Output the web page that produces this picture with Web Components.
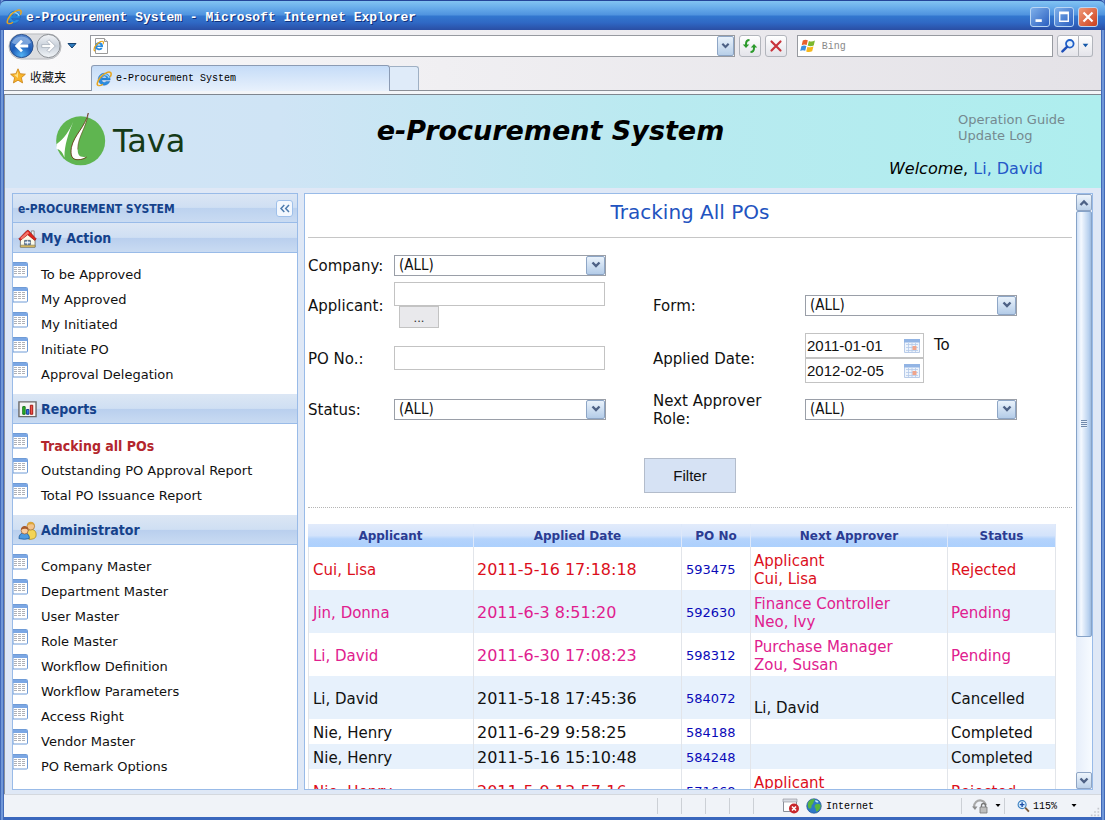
<!DOCTYPE html>
<html lang="en">
<head>
<meta charset="utf-8">
<title>e-Procurement System</title>
<style>
html, body { margin: 0; height: 100%; }
body { font-family: "DejaVu Sans", Verdana, sans-serif; font-size: 15px; color: #111; overflow: hidden; }
</style>
</head>
<body>
<browser-window></browser-window>

<script>
const ICONS = {
  ie: `<svg viewBox="0 0 16 16"><path d="M8.300 2.200a6 6 0 1 0 5.500 8.200h-3.600a2.600 2.600 0 0 1-4.600-1.400h8.600a6 6 0 0 0-5.900-6.800zM5.800 7a2.600 2.600 0 0 1 5 0z" fill="#2b8de0" stroke="#0d5cb0" stroke-width=".4"/><path d="M4 6.500a5 5 0 0 1 7.400-2 4 4 0 0 1 1.700 2.400" fill="none" stroke="#9fdcfa" stroke-width="1.200"/><path d="M2.800 14.600C.2 14.600 1 10.500 4.300 6.500 8 2 13 .2 14.600 1.600c1 .9.500 2.700-.3 4.200" fill="none" stroke="#e8a41c" stroke-width="1.500"/><path d="M2.800 14.600c1.500.2 3.200-.7 4.200-1.400" fill="none" stroke="#e8a41c" stroke-width="1.200"/></svg>`,
  page: `<svg viewBox="0 0 16 16"><path d="M2.500.5h9l3 3v12h-12z" fill="#fff" stroke="#9a9a9a"/><path d="M11.500.5v3h3" fill="#eee" stroke="#9a9a9a"/><path d="M6 4.200a4 4 0 1 0 3.700 5.500H7.500a1.900 1.900 0 0 1-3.300-.8H10A4 4 0 0 0 6 4.200zM4.300 7.500a1.800 1.800 0 0 1 3.400 0z" fill="#2b8de0"/><path d="M2 12.800C.3 12.600 1 9.500 3.200 7 5.500 4.200 9 2.500 10.200 3.600c.6.600.3 1.600-.2 2.600" fill="none" stroke="#e8a41c" stroke-width="1.200"/></svg>`,
  nav: `<svg viewBox="0 0 56 28"><defs><radialGradient id="a" cx=".5" cy=".9" r=".9"><stop offset="0" stop-color="#52b2f4"/><stop offset=".5" stop-color="#1d5cb8"/><stop offset="1" stop-color="#5a8ad0"/></radialGradient><linearGradient id="b" x2="0" y2="1"><stop offset="0" stop-color="#f2f4f7"/><stop offset=".5" stop-color="#c9d1db"/><stop offset="1" stop-color="#f3f6f9"/></linearGradient></defs><path d="M14 1h28a13 13 0 0 1 0 26H14a13 13 0 0 1 0-26z" fill="#dcdde0" stroke="#b5b7bb"/><circle cx="14" cy="13.500" r="12" fill="url(#a)" stroke="#274d8a"/><path d="M4 10a11 11 0 0 1 20 0c-5 3-15 3-20 0z" fill="#a9c8ee" opacity=".6"/><path d="M7 13.500l6.500-6.500 2 2-3 3H21v3h-8.500l3 3-2 2z" fill="#fff"/><circle cx="42" cy="13.500" r="12" fill="url(#b)" stroke="#85898f"/><path d="M49 13.500L42.500 7l-2 2 3 3H35v3h8.500l-3 3 2 2z" fill="#fff" stroke="#9aa3b0" stroke-width=".7"/></svg>`,
  tri: `<svg viewBox="0 0 10 8"><path d="M1 1.500h8L5 6z" fill="#2f7cc0" stroke="#14406e"/></svg>`,
  caret: `<svg viewBox="0 0 8 6"><path d="M1.500 1h5L4 4z" fill="currentColor"/></svg>`,
  chev: `<svg viewBox="0 0 10 8"><path d="M1.500 1.500L5 5l3.500-3.500" fill="none" stroke="#4d6185" stroke-width="2.400"/></svg>`,
  up: `<svg viewBox="0 0 10 8"><path d="M1.500 6L5 2.500 8.500 6" fill="none" stroke="#4d6185" stroke-width="2.400"/></svg>`,
  refresh: `<svg viewBox="0 0 16 16"><path d="M7.500 2C5 2 4 3.500 4 6v1" fill="none" stroke="#2b9a2b" stroke-width="2"/><path d="M.8 6.500h6.400L4 10z" fill="#2b9a2b"/><path d="M8.500 14c2.500 0 3.500-1.500 3.500-4V9" fill="none" stroke="#2b9a2b" stroke-width="2"/><path d="M8.800 9.500h6.400L12 6z" fill="#2b9a2b"/></svg>`,
  stop: `<svg viewBox="0 0 16 16"><path d="M3.500 3.500l9 9M12.500 3.500l-9 9" stroke="#c8333b" stroke-width="2.200" stroke-linecap="round"/></svg>`,
  windows: `<svg viewBox="0 0 16 16"><path d="M2.800 2.500q2.600-1.600 5-.2L6.700 7q-2.400-1.200-5 .2z" fill="#e8602c"/><path d="M8.900 2.900q2.700 1.300 6-.3L13.700 7.400q-3.200 1.500-6 .2z" fill="#7cb82f"/><path d="M1.400 8.300q2.600-1.500 5-.2l-1.200 4.700q-2.400-1.200-5 .2z" fill="#3a8ee0"/><path d="M7.400 8.700q2.800 1.300 6-.2l-1.200 4.800q-3.200 1.500-6 .2z" fill="#f6b71c"/></svg>`,
  search: `<svg viewBox="0 0 16 16"><circle cx="9.800" cy="5.800" r="3.800" fill="#e4f0fc" stroke="#1f5fc8" stroke-width="1.800"/><path d="M7 8.800l-4.600 4.600" stroke="#1f4fb8" stroke-width="2.500" stroke-linecap="round"/></svg>`,
  star: `<svg viewBox="0 0 16 16"><path d="M8 .8l2.100 4.900 5.300.5-4 3.500 1.200 5.200L8 12.200l-4.600 2.700 1.200-5.200-4-3.500 5.300-.5z" fill="#f8b52c" stroke="#c98012" stroke-width=".8"/><path d="M8 3v7l-4-3.200 2.500-.2z" fill="#fde28a"/></svg>`,
  min: `<svg viewBox="0 0 20 20"><path d="M5 12.500h7v3H5z" fill="#fff"/></svg>`,
  max: `<svg viewBox="0 0 20 20"><path d="M4.500 4h11v11.500h-11z M6 7v7h8V7z" fill="#fff" fill-rule="evenodd"/></svg>`,
  close: `<svg viewBox="0 0 20 20"><path d="M5 5l10 10M15 5L5 15" stroke="#fff" stroke-width="2.400"/></svg>`,
  logo: `<svg viewBox="168 56 150 160"><circle cx="242" cy="140" r="74" fill="#5fb550"/><path d="M220 82C207 112 192 134 169 150v14c12 2 20 14 24 26 0-38 12-72 27-108z" fill="#fff"/><path d="M263 60C256 98 224 122 215 158c-5 24 0 38 18 38 12 0 20-3 26-8-20 3-26-5-26-22 0-38 24-62 30-106z" fill="#fff"/><path d="M265 56C256 98 222 122 214 160c-4 24 2 38 20 37 12 0 20-4 26-8" fill="none" stroke="#6b3318" stroke-width="2.500"/><path d="M265 56c-3 40-32 70-32 110" fill="none" stroke="#6b3318" stroke-width="1.500"/></svg>`,
  home: `<svg viewBox="0 0 20 20"><path d="M14 2h3v6h-3z" fill="#eee" stroke="#777" stroke-width=".8"/><path d="M2.500 10.500L10 4l8 6.500V19h-15.500z" fill="#fdfae8" stroke="#777"/><path d="M2.500 17h15.500v2.200H2.500z" fill="#e8c35a" stroke="#776" stroke-width=".7"/><path d="M.8 10.500L9.500 1.500h1.500l8.200 9-1.600 1.500-7.400-6-7.800 6z" fill="#e0231b" stroke="#8d120d" stroke-width=".7"/><path d="M2.500 9.500L10 2.500l2 1.800-8 6.500z" fill="#f4776c"/><path d="M7 12h6v4.500H7z" fill="#8ea8c8" stroke="#567"/><path d="M10 12v4.500M7 14.200h6" stroke="#fff" stroke-width=".8"/></svg>`,
  chart: `<svg viewBox="0 0 20 18"><path d="M1 1h18v15.500H1z" fill="#f4f4f4" stroke="#6b6b6b" stroke-width="1.500"/><path d="M5 6h2.500v8H5z" fill="#2fbf2f" stroke="#106810"/><path d="M9 9h2.500v5H9z" fill="#3478e8" stroke="#123a90"/><path d="M13 4.500h2.500V14H13z" fill="#f05048" stroke="#a01410"/></svg>`,
  people: `<svg viewBox="0 0 20 20"><path d="M9 17c0-5 1-8 5-8s5.500 3 5 6.500-4 3.500-7 4z" fill="#f2d457" stroke="#a58418" stroke-width=".8"/><circle cx="13.500" cy="5.500" r="4" fill="#f4c48b" stroke="#9a6a2a" stroke-width=".7"/><path d="M9.400 5c.2-5.500 8-5.500 8.200 0-2-2-5-2-8.200 0z" fill="#dba63a"/><path d="M1 18.500c0-4 2-6 5.500-6s5.500 2 5.500 6q-5 1.500-11 0z" fill="#4d9ae0" stroke="#1b5799" stroke-width=".8"/><circle cx="7" cy="10" r="3.700" fill="#f9cda0" stroke="#9a5a2a" stroke-width=".7"/><path d="M3 9.500c0-5.500 8-5.500 8 0-2-1.800-5-1.800-8 0z" fill="#a85a2c"/></svg>`,
  grid: `<svg viewBox="0 0 15 16"><path d="M0 .5h13.500q1 0 1 1V14q0 1-1 1H0z" fill="#fff" stroke="#6f9bd6"/><path d="M0 1h13.500q.8 0 .8 1v2H0z" fill="#7ba7e4"/><path d="M1 5.500h3M5 5.500h3M9 5.500h3M1 7.500h3M5 7.500h3M9 7.500h3M1 9.500h3M5 9.500h3M9 9.500h3M1 11.500h3M5 11.500h3M9 11.500h3" stroke="#b0b2b8"/></svg>`,
  calendar: `<svg viewBox="0 0 16 16"><path d="M.5 1.500h15v13H.5z" fill="#eef4fc" stroke="#b8cbe8"/><path d="M0 1h16v3.500H0z" fill="#92b4e4"/><path d="M2 6.500h12M2 9.500h12M2 12.500h12M4.500 5v9M8 5v9M11.500 5v9" stroke="#b4c9e8" stroke-width=".8"/><path d="M8.500 8h4v4h-4z" fill="#f0a58c"/></svg>`,
  fold: `<svg viewBox="0 0 18 18"><rect x=".5" y=".5" width="16" height="16" rx="2.500" fill="#f3f8fe" stroke="#9fc0ea"/><path d="M8.300 5L5 8.500 8.300 12M13 5L9.700 8.500 13 12" fill="none" stroke="#4e7cae" stroke-width="1.500"/></svg>`,
  blocked: `<svg viewBox="0 0 18 16"><path d="M1.500 1.500h13v12h-13z" fill="#fff" stroke="#8a8f98"/><path d="M1 1h14v3H1z" fill="#d7dbe2" stroke="#8a8f98" stroke-width=".6"/><circle cx="12" cy="10.500" r="5" fill="#c8262b"/><path d="M10 8.500l4 4M14 8.500l-4 4" stroke="#fff" stroke-width="1.600"/></svg>`,
  globe: `<svg viewBox="0 0 16 16"><circle cx="8" cy="8" r="7.300" fill="#2d78c8" stroke="#1b4e88" stroke-width=".6"/><path d="M2 5C3 2 6 1 8.500 1c1 1.500-1 2-1 3.500S5 7 5.500 8.500 4 11 3 10.500 1.500 7 2 5z" fill="#59b63e"/><path d="M9.500 6.500c2-1.500 4.500-.5 5.300 1-.2 3-2 5-4 6.200-1.500-.7-.5-2.700-1.500-3.700s-.8-2.500.2-3.500z" fill="#59b63e"/><path d="M9 2.500c1.500-.5 3 .5 3.500 1.500-1 1-2.500.5-3-.2z" fill="#bfe8f8"/></svg>`,
  lock: `<svg viewBox="0 0 16 16"><path d="M2 9C2 5 5 2 9 2.500s4 3 5 5" fill="none" stroke="#a8a8a8" stroke-width="2.200"/><path d="M0 8.500h5.500L3 12z" fill="#8d8d8d"/><path d="M9.500 9V7.500a2 2 0 0 1 4 0V9" fill="none" stroke="#777" stroke-width="1.300"/><path d="M8 9h7v6H8z" fill="#bdbdbd" stroke="#777" stroke-width=".8"/></svg>`,
  zoom: `<svg viewBox="0 0 14 14"><circle cx="5.500" cy="5" r="4.300" fill="#d9efff" stroke="#3c7fc0" stroke-width="1.200"/><path d="M3 5h5M5.500 2.500v5" stroke="#1d4fa8" stroke-width="1.500"/><path d="M8.800 8.300l4 4.200" stroke="#7a5a3a" stroke-width="2"/></svg>`,
  grip: `<svg viewBox="0 0 12 12"><path d="M9 1h2v2H9zM5 5h2v2H5zM9 5h2v2H9zM1 9h2v2H1zM5 9h2v2H5zM9 9h2v2H9z" fill="#c5c8cd"/></svg>`
};

function define(name, css, html) {
  const t = document.createElement("template");
  t.innerHTML = `<style>*{box-sizing:border-box}${css}</style>${html}`;
  customElements.define(name, class extends HTMLElement {
    constructor() {
      super();
      this.attachShadow({ mode: "open" }).append(t.content.cloneNode(true));
    }
  });
}

customElements.define("ui-icon", class extends HTMLElement {
  connectedCallback() {
    if (this.shadowRoot) return;
    this.attachShadow({ mode: "open" }).innerHTML =
      `<style>:host{display:block;flex:none;width:16px;height:16px}svg{display:block;width:100%;height:100%}</style>` +
      ICONS[this.getAttribute("name")];
    this.setAttribute("aria-hidden", "true");
  }
});

define("title-bar", `
:host{display:flex;align-items:center;height:30px;padding:3px 7px 0 6px;gap:4px;border-top:1px solid #24459a;
 background:linear-gradient(#82c4f2,#6cb0ec 20%,#4f93df 48%,#3377cf 52%,#2f68c4 75%,#2a4ea4);
 border-radius:6px 6px 0 0}
h1{flex:1;margin:0;font:bold 13px "Liberation Mono",monospace;color:#fff;text-shadow:1px 1px 0 #10307c;white-space:nowrap}
button{width:20px;height:20px;padding:0;border:1px solid #b9d6f4;border-radius:3px;background:linear-gradient(135deg,#7fb0ea,#2a5fc0)}
button ui-icon{width:18px;height:18px}
.x{background:linear-gradient(135deg,#f09a78,#cc3f1c)}
`, `<ui-icon name="ie"></ui-icon><h1>e-Procurement System - Microsoft Internet Explorer</h1>
<button aria-label="Minimize"><ui-icon name="min"></ui-icon></button>
<button aria-label="Maximize"><ui-icon name="max"></ui-icon></button>
<button class="x" aria-label="Close"><ui-icon name="close"></ui-icon></button>`);

define("nav-bar", `
:host{display:flex;align-items:center;height:32px;padding:0 8px 0 4px}
.nav{width:54px;height:27px;padding:0;border:0;background:none}
.nav ui-icon{width:54px;height:27px}
.hist{width:20px;height:20px;margin-right:8px;padding:0 5px;border:0;background:none}
.hist ui-icon{width:10px;height:8px}
.box{display:flex;align-items:center;height:22px;border:1px solid #979aa0;background:#fff;padding-left:2px}
.addr{flex:648}
.bing{flex:255;gap:4px;margin:0 4px 0 10px}
input{flex:1;min-width:0;border:0;padding:0 2px;outline:0;background:none;height:18px;font:10px "Liberation Mono",monospace;color:#111}
input::placeholder{color:#8a8a8a;opacity:1}
.drop{width:17px;height:20px;padding:0 3px;border:1px solid #8ea6c6;border-radius:2px;background:linear-gradient(#e9f2fb,#b8cfe8)}
.drop ui-icon,.m ui-icon{width:9px;height:8px}
.b{width:22px;height:22px;margin-left:4px;padding:2px;border:1px solid #b2b5bc;border-radius:3px;background:linear-gradient(#fff,#e4e4ea)}
.go{margin:0;padding:2px 2px;border-radius:3px 0 0 3px}
.m{width:14px;margin:0;padding:0 2px;border-left:0;border-radius:0 3px 3px 0;color:#1457a8}
`, `<button class="nav" aria-label="Back and forward"><ui-icon name="nav"></ui-icon></button>
<button class="hist" aria-label="Recent pages"><ui-icon name="tri"></ui-icon></button>
<div class="box addr"><ui-icon name="page"></ui-icon><input aria-label="Address"><button class="drop" aria-label="Show addresses"><ui-icon name="chev"></ui-icon></button></div>
<button class="b" aria-label="Refresh"><ui-icon name="refresh"></ui-icon></button>
<button class="b" aria-label="Stop"><ui-icon name="stop"></ui-icon></button>
<div class="box bing"><ui-icon name="windows"></ui-icon><input placeholder="Bing" aria-label="Search"></div>
<button class="b go" aria-label="Search"><ui-icon name="search"></ui-icon></button><button class="b m" aria-label="Search options"><ui-icon name="caret"></ui-icon></button>`);

define("tab-strip", `
:host{display:flex;height:33px;flex-direction:column}
.row{display:flex;height:29px;align-items:flex-end;padding-top:3px;border-bottom:1px solid #8b8f97}
.fav{display:flex;align-items:center;gap:4px;width:87px;height:28px;padding-left:6px;font-size:12px;font-family:"Noto Sans CJK SC",sans-serif;color:#111}
.tab{display:flex;align-items:center;gap:4px;width:299px;height:26px;padding-left:4px;margin-bottom:-1px;
 border:1px solid #8b9bb4;border-bottom:0;border-radius:3px 3px 0 0;background:linear-gradient(#c5dcf8,#e8f1fc);
 font:10px "Liberation Mono",monospace;color:#000}
.new{width:29px;height:24px;border:1px solid #9fb0c4;border-left:0;border-bottom:0;border-radius:0 3px 0 0;background:#dfebf9}
.under{flex:1;background:#f3f5f8;border-bottom:1px solid #7f868f}
`, `<div class="row"><div class="fav"><ui-icon name="star"></ui-icon><span lang="zh">收藏夹</span></div>
<div class="tab"><ui-icon name="ie"></ui-icon><span>e-Procurement System</span></div>
<button class="new" aria-label="New tab"></button></div><div class="under"></div>`);

define("app-header", `
:host{display:grid;grid-template-columns:1fr auto 1fr;height:93px;padding-right:5px;
 background:linear-gradient(90deg,#d2e4f6,#cfe4f5 25%,#b9eaf0 60%,#aeeeee)}
.logo{display:flex;gap:7px;padding:18px 0 0 51px;color:#153a17;font-size:32px;line-height:56px}
.logo ui-icon{width:50px;height:53px}
h2{margin:0;padding-top:19px;font:italic bold 27px/34px "DejaVu Sans",sans-serif;color:#000}
.right{display:flex;flex-direction:column;align-items:flex-end;padding:17px 31px 0 0}
.links{display:flex;flex-direction:column;font-size:13px;line-height:16px}
.links a{color:#75898f;text-decoration:none}
p{margin:0;padding:15px 22px 0 0;font-size:16px;line-height:20px;color:#000}
p a{color:#2458c8;text-decoration:none}
`, `<div class="logo"><ui-icon name="logo"></ui-icon><span>Tava</span></div>
<h2>e-Procurement System</h2>
<div class="right"><nav class="links"><a href="#guide">Operation Guide</a><a href="#log">Update Log</a></nav>
<p><em>Welcome</em>, <a href="#user">Li, David</a></p></div>`);

define("menu-group", `
:host{display:block}
h3{display:flex;align-items:center;gap:4px;height:30px;margin:0;padding-left:5px;
 border-top:1px solid #dbe6f5;border-bottom:1px solid #99bbe8;
 background:linear-gradient(#dbe6f4,#cfdff3 48%,#b9cfee 50%,#c9dbf2);
 font:bold 14px/20px "DejaVu Sans Condensed","DejaVu Sans",sans-serif;font-stretch:condensed;color:#15428b}
h3 ::slotted(ui-icon){width:19px;height:19px}
ul{list-style:none;margin:0;padding:9px 0 7px}
`, `<h3><slot name="icon"></slot><slot name="title"></slot></h3><ul role="list"><slot></slot></ul>`);

customElements.define("menu-entry", class extends HTMLElement {
  connectedCallback() {
    if (this.shadowRoot) return;
    this.setAttribute("role", "listitem");
    this.attachShadow({ mode: "open" }).innerHTML = `<style>
:host{display:flex;gap:13px;height:25px;font-size:13px;line-height:26px}
ui-icon{width:15px;height:16px}
a{color:#111;text-decoration:none;white-space:nowrap}
:host([active]) a{color:#b3262d;font:bold 14px/26px "DejaVu Sans Condensed","DejaVu Sans",sans-serif;font-stretch:condensed}
</style><ui-icon name="grid"></ui-icon><a href="#menu"><slot></slot></a>`;
  }
});

define("side-menu", `
:host{display:block;border:1px solid #99bbe8;background:#fff;overflow:hidden}
header{display:flex;align-items:center;justify-content:space-between;height:29px;padding:2px 3px 0 5px;
 border-bottom:1px solid #99bbe8;background:linear-gradient(#dbe6f4,#cfdff3 48%,#bcd2ef 50%,#c9dbf2)}
h2{margin:0;font:bold 12px "DejaVu Sans Condensed","DejaVu Sans",sans-serif;font-stretch:condensed;color:#15428b}
header button{width:18px;height:18px;padding:0;border:0;background:none}
header button ui-icon{width:18px;height:18px}
`, `<header><h2>e-PROCUREMENT SYSTEM</h2><button aria-label="Collapse menu"><ui-icon name="fold"></ui-icon></button></header>
<menu-group><ui-icon slot="icon" name="home"></ui-icon><span slot="title">My Action</span>
<menu-entry>To be Approved</menu-entry><menu-entry>My Approved</menu-entry><menu-entry>My Initiated</menu-entry><menu-entry>Initiate PO</menu-entry><menu-entry>Approval Delegation</menu-entry></menu-group>
<menu-group><ui-icon slot="icon" name="chart"></ui-icon><span slot="title">Reports</span>
<menu-entry active>Tracking all POs</menu-entry><menu-entry>Outstanding PO Approval Report</menu-entry><menu-entry>Total PO Issuance Report</menu-entry></menu-group>
<menu-group><ui-icon slot="icon" name="people"></ui-icon><span slot="title">Administrator</span>
<menu-entry>Company Master</menu-entry><menu-entry>Department Master</menu-entry><menu-entry>User Master</menu-entry><menu-entry>Role Master</menu-entry><menu-entry>Workflow Definition</menu-entry><menu-entry>Workflow Parameters</menu-entry><menu-entry>Access Right</menu-entry><menu-entry>Vendor Master</menu-entry><menu-entry>PO Remark Options</menu-entry></menu-group>`);

const pick = id => `<span class="sel"><select id="${id}"><option>(ALL)</option></select><span class="arrow"><ui-icon name="chev"></ui-icon></span></span>`;
define("filter-form", `
:host{display:block}
form{display:grid;grid-template-columns:86px 259px 152px 1fr;grid-template-rows:24px 46px 50px 42px;row-gap:5px;align-items:center;padding-top:15px}
label{line-height:18px;padding-top:1px}
.wide{grid-column:2/5}
.sel{display:grid;width:212px;height:21px}
select,.arrow{grid-area:1/1}
select{appearance:none;width:212px;height:21px;margin:0;padding:0 4px;border:1px solid #9a9fa8;border-radius:0;background:#fff;
 font:15px/19px "DejaVu Sans Condensed","DejaVu Sans",sans-serif;font-stretch:condensed;color:#111}
.arrow{justify-self:end;z-index:1;pointer-events:none;display:grid;place-items:center;width:19px;height:19px;margin:1px;border:1px solid #8ea6c6;border-radius:2px;background:linear-gradient(#e9f2fb,#b4cce8)}
.arrow ui-icon{width:10px;height:8px}
input{display:block;width:211px;height:24px;padding:0 2px;border:1px solid #c3c3c3;border-radius:0;background:#fff;outline:0;font:15px "Liberation Sans",Arial,sans-serif;color:#111}
.more{display:block;width:40px;height:22px;margin-left:5px;padding:0;border:1px solid #c3c3c3;background:#e9e9ec;font:13px "Liberation Sans",Arial,sans-serif;color:#333}
.dates{display:grid;grid-template-columns:119px auto;column-gap:10px;justify-content:start}
.date{display:flex;align-items:center;width:119px;height:25px;padding-right:3px;border:1px solid #c3c3c3}
.date input{flex:1;min-width:0;height:21px;border:0;padding:0 1px}
.to{line-height:22px}
.go{display:flex;justify-content:center;padding:28px 0 14px}
.go button{width:92px;height:35px;border:1px solid #b3bccb;background:#d6e2f4;font:15px "Liberation Sans",Arial,sans-serif;color:#111}
`, `<form id="filters"><label for="company">Company:</label><div class="wide">${pick("company")}</div>
<label for="applicant">Applicant:</label><div><input id="applicant" type="text"><button type="button" class="more" aria-label="Choose applicant">...</button></div>
<label for="form">Form:</label><div>${pick("form")}</div>
<label for="po">PO No.:</label><div><input id="po" type="text"></div>
<label for="from">Applied Date:</label><div class="dates"><span class="date"><input id="from" type="text" value="2011-01-01"><ui-icon name="calendar"></ui-icon></span><label class="to" for="until">To</label><span class="date"><input id="until" type="text" value="2012-02-05"><ui-icon name="calendar"></ui-icon></span></div>
<label for="status">Status:</label><div>${pick("status")}</div>
<label for="role">Next Approver<br>Role:</label><div>${pick("role")}</div></form>
<div class="go"><button type="submit" form="filters">Filter</button></div>`);

const ORDERS = [
  ["rejected", "Cui, Lisa", "2011-5-16 17:18:18", "593475", "Applicant<br>Cui, Lisa", "Rejected"],
  ["pending", "Jin, Donna", "2011-6-3 8:51:20", "592630", "Finance Controller<br>Neo, Ivy", "Pending"],
  ["pending", "Li, David", "2011-6-30 17:08:23", "598312", "Purchase Manager<br>Zou, Susan", "Pending"],
  ["", "Li, David", "2011-5-18 17:45:36", "584072", "<br>Li, David", "Cancelled"],
  ["", "Nie, Henry", "2011-6-29 9:58:25", "584188", "", "Completed"],
  ["", "Nie, Henry", "2011-5-16 15:10:48", "584248", "", "Completed"],
  ["rejected", "Nie, Henry", "2011-5-9 13:57:16", "571668", "Applicant<br>", "Rejected"]
];
define("po-table", `
:host{display:block;border-top:1px dotted #b5b5b5;padding:16px 16px 0 0}
table{width:100%;table-layout:fixed;border-collapse:separate;border-spacing:0;line-height:18px}
.a{width:166px}.d{width:208px}.p{width:69px}.s{width:108px}
th{height:23px;padding:1px 0 0;font-size:12px;color:#2b3c92;border-right:1px solid #dde8fa;background:linear-gradient(#e2ebfb,#d3e3fb 50%,#b4d3fc 65%,#acd0fd)}
td{height:25px;padding:2px 3px 0;border-right:1px solid #e2e5ea;white-space:nowrap}
td:first-child{padding-left:4px;border-left:1px solid #e2e5ea}
td:nth-child(3){padding-left:4px}
.two td{height:43px}
tr:nth-child(even) td{background:#e7f1fc}
.time{font-size:16px}
a{font-size:13px;color:#0a0ab8;text-decoration:none}
.rejected{color:#dc0f1c}.pending{color:#e0208e}
`, `<table><colgroup><col class="a"><col class="d"><col class="p"><col><col class="s"></colgroup>
<thead><tr><th>Applicant</th><th>Applied Date</th><th>PO No</th><th>Next Approver</th><th>Status</th></tr></thead><tbody>${
ORDERS.map(([k, who, when, no, next, st]) => `<tr class="${k}${next ? " two" : ""}"><td>${who}</td><td class="time">${when}</td><td><a href="#po">${no}</a></td><td>${next.endsWith("<br>") ? next + "&nbsp;" : next}</td><td>${st}</td></tr>`).join("")
}</tbody></table>`);

define("scroll-rail", `
:host{display:flex;flex-direction:column;width:16px;background:linear-gradient(90deg,#e6eefa,#f7fbff)}
button,.thumb{flex:none;display:grid;place-items:center;padding:0;border:1px solid #8fa5c4;border-radius:2px;background:linear-gradient(#eef5fc,#bdd2ea)}
button{width:16px;height:17px}
button ui-icon{width:10px;height:8px}
.track{flex:1}
.thumb{height:76%;border-color:#86a3c8;background:linear-gradient(90deg,#cfe0f6,#f4f9ff 30%,#b7d0ee 85%,#9dbbe0)}
.thumb i{width:6px;height:8px;background:repeating-linear-gradient(#7189ab 0 1px,#e6effa 1px 2px)}
`, `<button aria-label="Scroll up"><ui-icon name="up"></ui-icon></button>
<div class="track"><div class="thumb"><i></i></div></div>
<button aria-label="Scroll down"><ui-icon name="chev"></ui-icon></button>`);

define("tracking-panel", `
:host{display:flex;border:1px solid #99bbe8;background:#fff;overflow:hidden}
main{flex:1;min-width:0;padding:0 4px 0 3px;overflow:hidden}
h1{margin:0;height:44px;border-bottom:1px solid #c6c6c6;font-size:20px;font-weight:normal;line-height:36px;text-align:center;color:#2253c0}
`, `<main><h1>Tracking All POs</h1><filter-form></filter-form><po-table></po-table></main><scroll-rail></scroll-rail>`);

define("status-bar", `
:host{display:flex;align-items:center;height:23px;background:#f0f3f8;border-top:1px solid #d4d8de;font:10px "Liberation Mono",monospace;color:#000;padding-right:1px}
.space{flex:1}
.cell{width:24px;height:16px;border-left:1px solid #ccd0d6}
.zone{display:flex;align-items:center;gap:4px;width:184px;padding-left:5px}
.zone ui-icon:first-child{width:18px;margin-right:2px}
.group{display:flex;align-items:center;height:16px;border-left:1px solid #ccd0d6;padding-left:10px;gap:6px;width:43px}
.group ui-icon:last-child,.caret{width:8px;height:6px}
.zoom{width:86px;gap:3px;padding-left:12px}
.zoom ui-icon:first-child{width:13px;height:13px}
.zoom ui-icon:last-child{margin-left:10px}
.grip{width:10px;height:10px;align-self:flex-end}
`, `<span class="space"></span><span class="cell"></span><span class="cell"></span><span class="cell"></span><span class="cell"></span><span class="cell"></span>
<span class="zone"><ui-icon name="blocked"></ui-icon><ui-icon name="globe"></ui-icon><span>Internet</span></span>
<span class="group"><ui-icon name="lock"></ui-icon><ui-icon name="caret"></ui-icon></span>
<span class="group zoom"><ui-icon name="zoom"></ui-icon><span>115%</span><ui-icon name="caret"></ui-icon></span><ui-icon class="grip" name="grip"></ui-icon>`);

define("browser-window", `
:host{display:flex;flex-direction:column;height:100vh;background:linear-gradient(90deg,#2c53a8,#86aee8 2px,#2c53a8 4px,#2c53a8 calc(100% - 4px),#86aee8 calc(100% - 2px),#2c53a8);}
.frame{flex:1;min-height:0;display:flex;flex-direction:column;margin:0 4px;border-bottom:3px solid #3a67bd}
.chrome{background:linear-gradient(90deg,#fafafb,#f0eff2 40%,#e4e2e7)}
.page{flex:1;min-height:0;display:flex;flex-direction:column;background:#dfe8f6;border-left:1px solid #8c929b}
.cols{flex:1;min-height:0;display:grid;grid-template-columns:286px 1fr;gap:6px;padding:5px 8px 4px 7px}
`, `<title-bar></title-bar><div class="frame"><div class="chrome"><nav-bar></nav-bar><tab-strip></tab-strip></div>
<div class="page"><app-header></app-header><div class="cols"><side-menu></side-menu><tracking-panel></tracking-panel></div></div>
<status-bar></status-bar></div>`);
</script>
</body>
</html>
